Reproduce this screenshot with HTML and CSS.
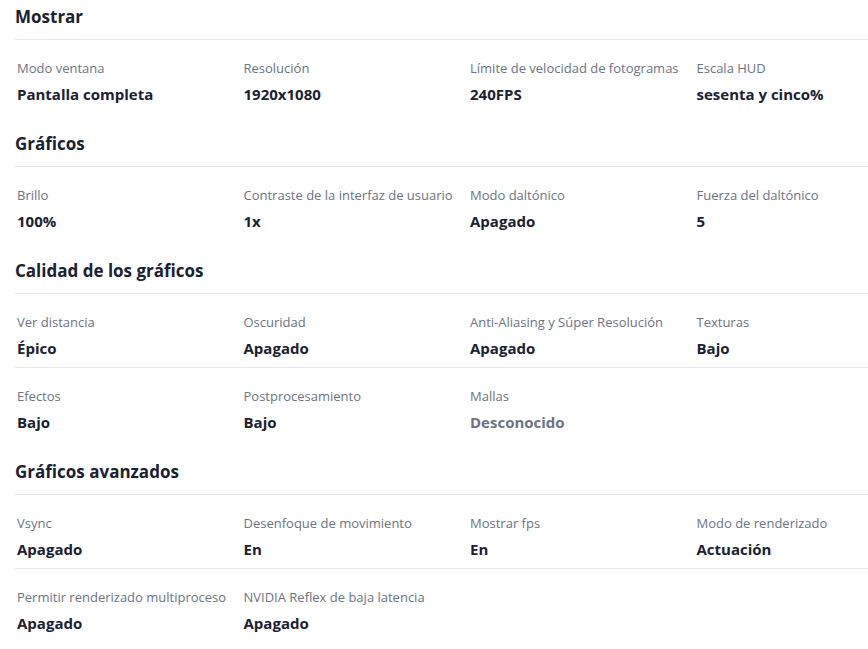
FILE: index.html
```html
<!DOCTYPE html>
<html lang="es">
<head>
    <meta charset="UTF-8">
    <meta name="viewport" content="width=device-width, initial-scale=1.0">
    <title>Ajustes de vídeo</title>
    <link rel="stylesheet" href="styles.css">
</head>
<body>
    <div class="settings">
        <section class="group">
            <h3>Mostrar</h3>
            <div class="row">
                <div class="item"><span class="label">Modo ventana</span><span class="value">Pantalla completa</span></div>
                <div class="item"><span class="label">Resolución</span><span class="value">1920x1080</span></div>
                <div class="item"><span class="label">Límite de velocidad de fotogramas</span><span class="value">240FPS</span></div>
                <div class="item"><span class="label">Escala HUD</span><span class="value">sesenta y cinco%</span></div>
            </div>
        </section>

        <section class="group">
            <h3>Gráficos</h3>
            <div class="row">
                <div class="item"><span class="label">Brillo</span><span class="value">100%</span></div>
                <div class="item"><span class="label">Contraste de la interfaz de usuario</span><span class="value">1x</span></div>
                <div class="item"><span class="label">Modo daltónico</span><span class="value">Apagado</span></div>
                <div class="item"><span class="label">Fuerza del daltónico</span><span class="value">5</span></div>
            </div>
        </section>

        <section class="group">
            <h3>Calidad de los gráficos</h3>
            <div class="row">
                <div class="item"><span class="label">Ver distancia</span><span class="value">Épico</span></div>
                <div class="item"><span class="label">Oscuridad</span><span class="value">Apagado</span></div>
                <div class="item"><span class="label">Anti-Aliasing y Súper Resolución</span><span class="value">Apagado</span></div>
                <div class="item"><span class="label">Texturas</span><span class="value">Bajo</span></div>
            </div>
            <div class="row">
                <div class="item"><span class="label">Efectos</span><span class="value">Bajo</span></div>
                <div class="item"><span class="label">Postprocesamiento</span><span class="value">Bajo</span></div>
                <div class="item"><span class="label">Mallas</span><span class="value unknown">Desconocido</span></div>
            </div>
        </section>

        <section class="group">
            <h3>Gráficos avanzados</h3>
            <div class="row">
                <div class="item"><span class="label">Vsync</span><span class="value">Apagado</span></div>
                <div class="item"><span class="label">Desenfoque de movimiento</span><span class="value">En</span></div>
                <div class="item"><span class="label">Mostrar fps</span><span class="value">En</span></div>
                <div class="item"><span class="label">Modo de renderizado</span><span class="value">Actuación</span></div>
            </div>
            <div class="row">
                <div class="item"><span class="label">Permitir renderizado multiproceso</span><span class="value">Apagado</span></div>
                <div class="item"><span class="label">NVIDIA Reflex de baja latencia</span><span class="value">Apagado</span></div>
            </div>
        </section>
    </div>
</body>
</html>
```

FILE: styles.css
```css
html, body {
    overflow: hidden;
}
body {
    margin: 0;
    background: #ffffff;
    font-family: "Open Sans", "Noto Sans", sans-serif;
    color: #1a2133;
}
.settings {
    padding-left: 15px;
}
.group + .group {
    margin-top: 14px;
}
h3 {
    margin: 0;
    padding: 5px 0 10px;
    font-size: 17px;
    line-height: 24px;
    font-weight: 700;
    color: #1a2133;
}
.row {
    display: grid;
    grid-template-columns: 226.5px 226.5px 226.5px 1fr;
    border-top: 1px solid #e8eaee;
    padding: 0 0 8px;
}
.item {
    display: flex;
    flex-direction: column;
    padding-left: 2px;
    min-width: 0;
}
.label {
    padding-top: 18px;
    font-size: 13px;
    line-height: 20px;
    color: #6b7384;
    white-space: nowrap;
}
.value {
    margin-top: 5px;
    font-size: 15px;
    line-height: 22px;
    font-weight: 700;
    color: #1a2133;
}
.value.unknown {
    color: #6b7384;
}
```
